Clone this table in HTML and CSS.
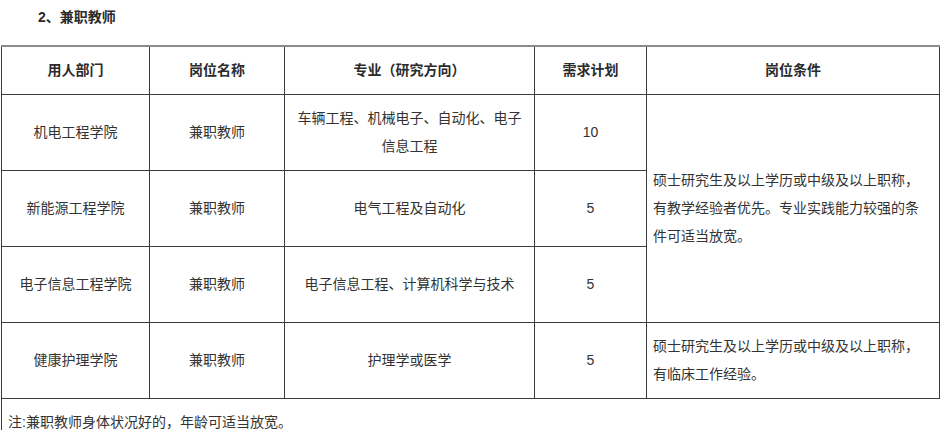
FILE: index.html
```html
<!DOCTYPE html>
<html lang="zh-CN">
<head>
<meta charset="utf-8">
<title>兼职教师</title>
<link rel="stylesheet" href="styles.css">
</head>
<body>
<div class="title">2、兼职教师</div>
<table class="jobs">
  <colgroup>
    <col class="c1"><col class="c2"><col class="c3"><col class="c4"><col class="c5">
  </colgroup>
  <thead>
    <tr class="head">
      <th>用人部门</th>
      <th>岗位名称</th>
      <th>专业（研究方向）</th>
      <th>需求计划</th>
      <th>岗位条件</th>
    </tr>
  </thead>
  <tbody>
    <tr class="row">
      <td>机电工程学院</td>
      <td>兼职教师</td>
      <td class="major">车辆工程、机械电子、自动化、电子信息工程</td>
      <td>10</td>
      <td class="cond" rowspan="3">硕士研究生及以上学历或中级及以上职称，有教学经验者优先。专业实践能力较强的条件可适当放宽。</td>
    </tr>
    <tr class="row">
      <td>新能源工程学院</td>
      <td>兼职教师</td>
      <td class="major">电气工程及自动化</td>
      <td>5</td>
    </tr>
    <tr class="row">
      <td>电子信息工程学院</td>
      <td>兼职教师</td>
      <td class="major">电子信息工程、计算机科学与技术</td>
      <td>5</td>
    </tr>
    <tr class="row">
      <td>健康护理学院</td>
      <td>兼职教师</td>
      <td class="major">护理学或医学</td>
      <td>5</td>
      <td class="cond">硕士研究生及以上学历或中级及以上职称，有临床工作经验。</td>
    </tr>
    <tr class="note">
      <td colspan="5">注:兼职教师身体状况好的，年龄可适当放宽。</td>
    </tr>
  </tbody>
</table>
</body>
</html>
```

FILE: styles.css
```css
html, body {
  margin: 0;
  padding: 0;
  background: #ffffff;
}
body {
  font-family: "Liberation Sans", "Noto Sans CJK SC", sans-serif;
  font-size: 14px;
  color: #333333;
  overflow: hidden;
}
.title {
  height: 45px;
  line-height: 34px;
  padding-left: 38px;
  font-weight: bold;
  color: #2b2b2b;
}
.jobs {
  border-collapse: collapse;
  table-layout: fixed;
  width: 938px;
  margin-left: 1px;
}
.c1 { width: 148px; }
.c2 { width: 135px; }
.c3 { width: 250px; }
.c4 { width: 112px; }
.c5 { width: 293px; }
.jobs th,
.jobs td {
  border: 1px solid #3c3c3c;
  text-align: center;
  vertical-align: middle;
  line-height: 28px;
  padding: 0 8px;
  font-weight: normal;
}
.jobs thead th {
  border-top: 2px solid #8c8c8c;
  font-weight: bold;
  color: #2b2b2b;
}
.head { height: 48px; }
.row { height: 76px; }
.jobs td.major { padding: 0 12px; }
.jobs td.cond {
  text-align: left;
  padding: 0 14px 0 6px;
}
.note td {
  text-align: left;
  border-right: none;
  border-bottom: none;
  padding: 9px 6px 0 6px;
}
```
